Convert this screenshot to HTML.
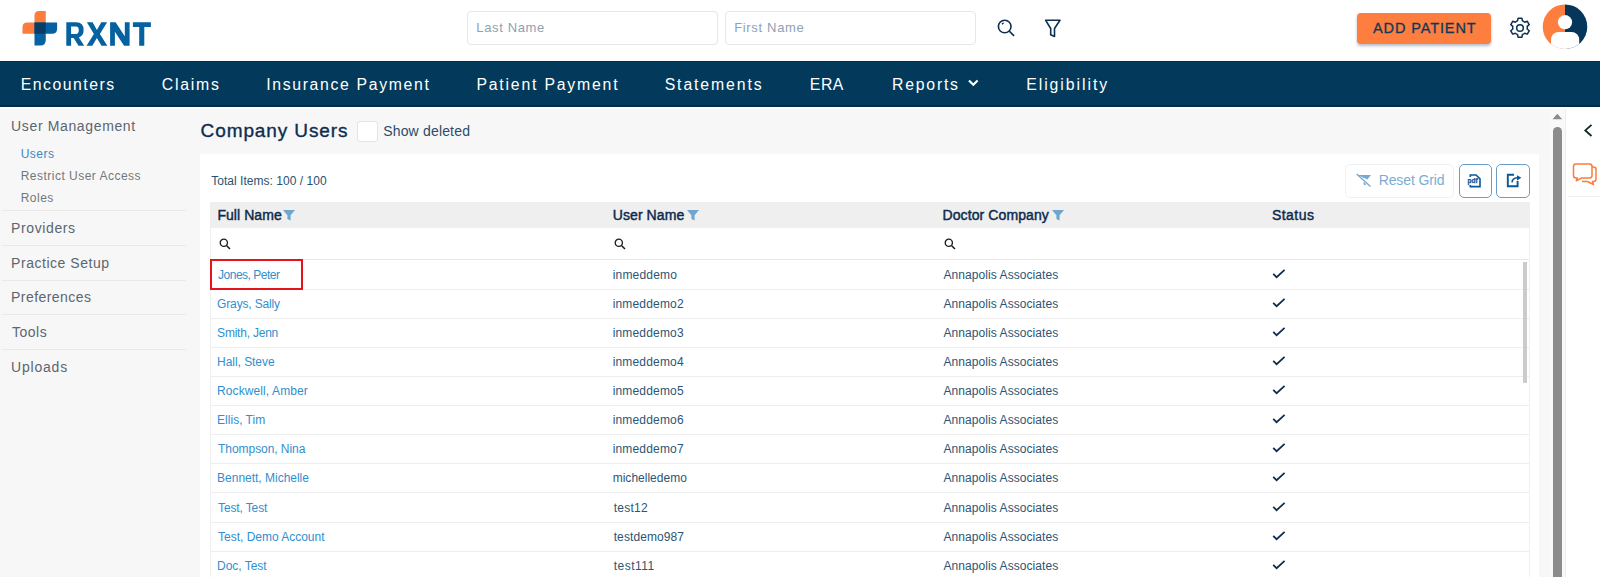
<!DOCTYPE html>
<html><head><meta charset="utf-8"><style>
html,body{margin:0;padding:0;}
body{width:1600px;height:577px;overflow:hidden;position:relative;background:#f7f7f7;font-family:'Liberation Sans', sans-serif;}
.t{position:absolute;white-space:nowrap;}
.a{position:absolute;}
</style></head><body>
<!-- header -->
<div class=a style="left:0;top:0;width:1600px;height:61px;background:#fff"></div>
<svg class=a style="left:0;top:0" width="160" height="60" viewBox="0 0 160 60">
 <path d="M34.5 15.5 Q34.5 11 39 11 H45.75 V33.75 H22.5 V27 Q22.5 22.5 27 22.5 H34.5 Z" fill="#fb7d3c"/>
 <path d="M34.5 22.5 H57.1 V28.8 Q57.1 33.75 52.1 33.75 H45.75 V40.1 Q45.75 45.6 40.25 45.6 H34.5 Z" fill="#0561a0"/>
 <path d="M34.5 22.5 H45.75 V31.2 Q45.75 33.75 43.2 33.75 H34.5 Z" fill="#0a3d66"/>
 <g fill="#0561a0" fill-rule="evenodd">
 <path d="M66.3 22.3 H76.2 Q83.6 22.3 83.6 30 Q83.6 35.8 78.9 37.4 L84.2 45.7 H78.5 L73.7 38 H71.1 V45.7 H66.3 Z M71.1 26.5 V33.9 H76 Q78.8 33.9 78.8 30.2 Q78.8 26.5 76 26.5 Z"/>
 <path d="M86.9 22.3 H92.6 L96.9 30.1 L101.3 22.3 H107.1 L99.9 34.1 L107.3 45.7 H101.5 L96.9 37.9 L92.3 45.7 H86.6 L93.9 34.1 Z"/>
 <path d="M110.1 22.3 H115.6 L124.8 36.2 V22.3 H129.6 V45.7 H124.1 L114.9 31.8 V45.7 H110.1 Z"/>
 <path d="M132.9 22.3 H150.9 V27 H144.3 V45.7 H139.2 V27 H132.9 Z"/>
 </g>
</svg>
<div class=a style="left:466.5px;top:11px;width:249px;height:32px;border:1px solid #e6e6e6;border-radius:4px;background:#fff"></div>
<div class=a style="left:725px;top:11px;width:249px;height:32px;border:1px solid #e6e6e6;border-radius:4px;background:#fff"></div>
<svg class=a style="left:995px;top:17px" width="22" height="22" viewBox="0 0 22 22"><circle cx="9.7" cy="9.5" r="6.3" fill="none" stroke="#0c2f52" stroke-width="1.6"/><path d="M7 7.2 L8.6 5.8" stroke="#0c2f52" stroke-width="1.3"/><path d="M14.2 14 L19 18.8" stroke="#0c2f52" stroke-width="1.7"/></svg>
<svg class=a style="left:1043px;top:18px" width="20" height="22" viewBox="0 0 20 22"><path d="M2.7 2.3 H17 L11.5 10.5 V18.5 L7.7 16.8 V10.5 Z" fill="none" stroke="#0c2f52" stroke-width="1.6" stroke-linejoin="round"/></svg>
<div class=a style="left:1356.6px;top:13.2px;width:134.5px;height:30.4px;background:#fd7e3e;border-radius:4px;box-shadow:0 2px 3px rgba(40,60,90,0.35)"></div>
<svg class=a style="left:1507px;top:15px" width="26" height="26" viewBox="0 0 26 26">
 <path d="M11.1 3.2 h3.8 l0.6 2.7 a7.6 7.6 0 0 1 2.2 1.3 l2.6 -0.9 l1.9 3.3 l-2 1.8 a7.6 7.6 0 0 1 0 2.6 l2 1.8 l-1.9 3.3 l-2.6 -0.9 a7.6 7.6 0 0 1 -2.2 1.3 l-0.6 2.7 h-3.8 l-0.6 -2.7 a7.6 7.6 0 0 1 -2.2 -1.3 l-2.6 0.9 l-1.9 -3.3 l2 -1.8 a7.6 7.6 0 0 1 0 -2.6 l-2 -1.8 l1.9 -3.3 l2.6 0.9 a7.6 7.6 0 0 1 2.2 -1.3 Z" fill="none" stroke="#0c2f52" stroke-width="1.5" stroke-linejoin="round"/>
 <circle cx="13" cy="13" r="3.3" fill="none" stroke="#0c2f52" stroke-width="1.5"/>
</svg>
<svg class=a style="left:1542px;top:4px" width="46" height="46" viewBox="0 0 46 46">
 <defs><clipPath id="avc"><circle cx="23" cy="22.7" r="22.3"/></clipPath></defs>
 <g clip-path="url(#avc)">
  <rect x="0" y="0" width="23" height="46" fill="#fd7e3e"/>
  <rect x="23" y="0" width="23" height="46" fill="#06375a"/>
  <circle cx="23" cy="18.2" r="7.1" fill="#fff"/>
  <rect x="9" y="28" width="28.2" height="30" rx="7.5" fill="#fff"/>
 </g>
</svg>
<!-- nav -->
<div class=a style="left:0;top:61px;width:1600px;height:46px;background:#033a5b;box-shadow:inset 0 -2px 0 #022b4b, inset 0 1px 0 #022e4c"></div>
<svg class=a style="left:966px;top:78px" width="14" height="10" viewBox="0 0 14 10"><path d="M3 2.5 L7.3 6.8 L11.6 2.5" fill="none" stroke="#fff" stroke-width="2.2"/></svg>
<div class=a style="left:0;top:107px;width:1600px;height:2px;background:#fff"></div>
<!-- sidebar separators -->
<div class=a style="left:2px;top:210px;width:184px;height:1px;background:#e9e9e9"></div>
<div class=a style="left:2px;top:245px;width:184px;height:1px;background:#e9e9e9"></div>
<div class=a style="left:2px;top:279.5px;width:184px;height:1px;background:#e9e9e9"></div>
<div class=a style="left:2px;top:314px;width:184px;height:1px;background:#e9e9e9"></div>
<div class=a style="left:2px;top:349px;width:184px;height:1px;background:#e9e9e9"></div>
<!-- checkbox -->
<div class=a style="left:357.4px;top:120.7px;width:18.6px;height:19px;border:1px solid #e4e4e4;border-radius:3px;background:#fff"></div>
<!-- card -->
<div class=a style="left:200px;top:154.3px;width:1339px;height:430px;background:#fff"></div>
<div class=a style="left:1344.7px;top:164px;width:107px;height:31.5px;border:1px solid #eef2f5;border-radius:5px;background:#fff"></div>
<svg class=a style="left:1355px;top:172px" width="18" height="16" viewBox="0 0 18 16"><path d="M2.5 3 H16 L12.3 7.5 Z" fill="#76aad0"/><path d="M1.6 2 L15.5 14.6" stroke="#76aad0" stroke-width="1.4"/><path d="M9 10 L11 12.2 L10.2 13.2 Q8.6 13.2 8.4 11.5 Z" fill="#76aad0"/></svg>
<div class=a style="left:1458.5px;top:164.2px;width:31.5px;height:31.5px;border:1px solid #6a9ec8;border-radius:5px;background:#fff"></div>
<div class=a style="left:1496.3px;top:164.2px;width:31.5px;height:31.5px;border:1px solid #6a9ec8;border-radius:5px;background:#fff"></div>
<svg class=a style="left:1466px;top:172px" width="18" height="18" viewBox="0 0 18 18"><path d="M4.3 5 V3 H10 L14 6.8 V14.6 H4.3 V13" fill="none" stroke="#0a5896" stroke-width="1.6"/><text x="1.5" y="11.4" font-family="Liberation Sans" font-weight="bold" font-size="6.6" fill="#0a5896" stroke="#0a5896" stroke-width="0.25" textLength="10.2" lengthAdjust="spacingAndGlyphs">pdf</text></svg>
<svg class=a style="left:1505px;top:172px" width="18" height="18" viewBox="0 0 18 18"><path d="M9 2.8 H2.8 V14.2 H12.6 V9" fill="none" stroke="#0a5896" stroke-width="1.9"/><path d="M7 10.3 Q7.4 6.2 12.5 5.8" fill="none" stroke="#0a5896" stroke-width="1.6"/><path d="M12 3.2 L16.4 5.8 L12 8.4 Z" fill="#0a5896"/></svg>
<!-- table -->
<div class=a style="left:210.1px;top:202px;width:1319.8px;height:25.7px;background:#efefef"></div>
<div class=a style="left:210px;top:227.7px;width:1px;height:350px;background:#f0f0f0"></div>
<div class=a style="left:1529px;top:227.7px;width:1px;height:350px;background:#f0f0f0"></div>
<div class=a style="left:211px;top:259px;width:1318px;height:1px;background:#e6e6e6"></div>
<div style="position:absolute;left:211px;top:289.00px;width:1318px;height:1px;background:#eeeeee"></div>
<div style="position:absolute;left:211px;top:318.07px;width:1318px;height:1px;background:#eeeeee"></div>
<div style="position:absolute;left:211px;top:347.14px;width:1318px;height:1px;background:#eeeeee"></div>
<div style="position:absolute;left:211px;top:376.21px;width:1318px;height:1px;background:#eeeeee"></div>
<div style="position:absolute;left:211px;top:405.28px;width:1318px;height:1px;background:#eeeeee"></div>
<div style="position:absolute;left:211px;top:434.35px;width:1318px;height:1px;background:#eeeeee"></div>
<div style="position:absolute;left:211px;top:463.42px;width:1318px;height:1px;background:#eeeeee"></div>
<div style="position:absolute;left:211px;top:492.49px;width:1318px;height:1px;background:#eeeeee"></div>
<div style="position:absolute;left:211px;top:521.56px;width:1318px;height:1px;background:#eeeeee"></div>
<div style="position:absolute;left:211px;top:550.63px;width:1318px;height:1px;background:#eeeeee"></div>
<div style="position:absolute;left:211px;top:579.70px;width:1318px;height:1px;background:#eeeeee"></div>

<svg style="position:absolute;left:218.5px;top:238px" width="13" height="12" viewBox="0 0 13 12"><circle cx="4.8" cy="4.8" r="3.6" fill="none" stroke="#1b1b1b" stroke-width="1.3"/><path d="M7.5 7.5 L11 11" stroke="#1b1b1b" stroke-width="1.5"/></svg>
<svg style="position:absolute;left:613.5px;top:238px" width="13" height="12" viewBox="0 0 13 12"><circle cx="4.8" cy="4.8" r="3.6" fill="none" stroke="#1b1b1b" stroke-width="1.3"/><path d="M7.5 7.5 L11 11" stroke="#1b1b1b" stroke-width="1.5"/></svg>
<svg style="position:absolute;left:944px;top:238px" width="13" height="12" viewBox="0 0 13 12"><circle cx="4.8" cy="4.8" r="3.6" fill="none" stroke="#1b1b1b" stroke-width="1.3"/><path d="M7.5 7.5 L11 11" stroke="#1b1b1b" stroke-width="1.5"/></svg>
<svg style="position:absolute;left:283.2px;top:209.5px" width="12" height="11" viewBox="0 0 12 11"><path d="M0 0 H12 L7.6 5.2 V10.5 L4.4 9 V5.2 Z" fill="#6fa6cf"/></svg>
<svg style="position:absolute;left:686.5px;top:209.5px" width="12" height="11" viewBox="0 0 12 11"><path d="M0 0 H12 L7.6 5.2 V10.5 L4.4 9 V5.2 Z" fill="#6fa6cf"/></svg>
<svg style="position:absolute;left:1051.7px;top:209.5px" width="12" height="11" viewBox="0 0 12 11"><path d="M0 0 H12 L7.6 5.2 V10.5 L4.4 9 V5.2 Z" fill="#6fa6cf"/></svg>
<svg style="position:absolute;left:1272px;top:269.00px" width="14" height="10" viewBox="0 0 14 10"><path d="M1.2 4.8 L4.6 8.2 L12.6 0.8" fill="none" stroke="#0c2b4d" stroke-width="1.7"/></svg>
<svg style="position:absolute;left:1272px;top:298.07px" width="14" height="10" viewBox="0 0 14 10"><path d="M1.2 4.8 L4.6 8.2 L12.6 0.8" fill="none" stroke="#0c2b4d" stroke-width="1.7"/></svg>
<svg style="position:absolute;left:1272px;top:327.14px" width="14" height="10" viewBox="0 0 14 10"><path d="M1.2 4.8 L4.6 8.2 L12.6 0.8" fill="none" stroke="#0c2b4d" stroke-width="1.7"/></svg>
<svg style="position:absolute;left:1272px;top:356.21px" width="14" height="10" viewBox="0 0 14 10"><path d="M1.2 4.8 L4.6 8.2 L12.6 0.8" fill="none" stroke="#0c2b4d" stroke-width="1.7"/></svg>
<svg style="position:absolute;left:1272px;top:385.28px" width="14" height="10" viewBox="0 0 14 10"><path d="M1.2 4.8 L4.6 8.2 L12.6 0.8" fill="none" stroke="#0c2b4d" stroke-width="1.7"/></svg>
<svg style="position:absolute;left:1272px;top:414.35px" width="14" height="10" viewBox="0 0 14 10"><path d="M1.2 4.8 L4.6 8.2 L12.6 0.8" fill="none" stroke="#0c2b4d" stroke-width="1.7"/></svg>
<svg style="position:absolute;left:1272px;top:443.42px" width="14" height="10" viewBox="0 0 14 10"><path d="M1.2 4.8 L4.6 8.2 L12.6 0.8" fill="none" stroke="#0c2b4d" stroke-width="1.7"/></svg>
<svg style="position:absolute;left:1272px;top:472.49px" width="14" height="10" viewBox="0 0 14 10"><path d="M1.2 4.8 L4.6 8.2 L12.6 0.8" fill="none" stroke="#0c2b4d" stroke-width="1.7"/></svg>
<svg style="position:absolute;left:1272px;top:501.56px" width="14" height="10" viewBox="0 0 14 10"><path d="M1.2 4.8 L4.6 8.2 L12.6 0.8" fill="none" stroke="#0c2b4d" stroke-width="1.7"/></svg>
<svg style="position:absolute;left:1272px;top:530.63px" width="14" height="10" viewBox="0 0 14 10"><path d="M1.2 4.8 L4.6 8.2 L12.6 0.8" fill="none" stroke="#0c2b4d" stroke-width="1.7"/></svg>
<svg style="position:absolute;left:1272px;top:559.70px" width="14" height="10" viewBox="0 0 14 10"><path d="M1.2 4.8 L4.6 8.2 L12.6 0.8" fill="none" stroke="#0c2b4d" stroke-width="1.7"/></svg>

<div class=a style="left:1523.4px;top:262.4px;width:3.6px;height:121px;background:#cbcbcb"></div>
<!-- red highlight -->
<div class=a style="left:210.1px;top:259.3px;width:89px;height:26.5px;border:2px solid #e3141c"></div>
<!-- outer scrollbar -->
<div class=a style="left:1549.8px;top:109.4px;width:15.6px;height:470px;background:#f9f9f9"></div>
<svg class=a style="left:1552px;top:113px" width="11" height="7" viewBox="0 0 11 7"><path d="M0.5 6.3 L5.3 0.8 L10.2 6.3 Z" fill="#8c8c8c"/></svg>
<div class=a style="left:1552.6px;top:127px;width:9.6px;height:460px;background:#8c8c8c;border-radius:5px"></div>
<!-- right panel -->
<div class=a style="left:1565.4px;top:109.4px;width:34.6px;height:470px;background:#fff;border-left:1px solid #ececec"></div>
<svg class=a style="left:1582px;top:123px" width="12" height="15" viewBox="0 0 12 15"><path d="M9.5 1.8 L3.3 7.4 L9.5 13" fill="none" stroke="#0b2b1f" stroke-width="1.8"/></svg>
<svg class=a style="left:1572px;top:162px" width="26" height="25" viewBox="0 0 26 25"><path d="M8.5 5 H21.5 Q24 5 24 7.5 V17 Q24 19.5 21.5 19.5 H20.5 L21.5 22.5 L15.5 19.5 H10" fill="none" stroke="#fb7d3c" stroke-width="1.5" stroke-linejoin="round"/><path d="M4 2 H17.5 Q20 2 20 4.5 V13.5 Q20 16 17.5 16 H9.5 L4.3 18.8 L5.3 16 H4 Q1.5 16 1.5 13.5 V4.5 Q1.5 2 4 2 Z" fill="#fff" stroke="#fb7d3c" stroke-width="1.5" stroke-linejoin="round"/></svg>
<div class=a style="left:1568px;top:195.5px;width:32px;height:1px;background:#efefef"></div>
<div class=t style="left:20.70px;top:77.00px;font-size:15.8px;line-height:15.8px;font-weight:normal;color:#ffffff;letter-spacing:1.500px;">Encounters</div>
<div class=t style="left:161.70px;top:77.00px;font-size:15.8px;line-height:15.8px;font-weight:normal;color:#ffffff;letter-spacing:1.800px;">Claims</div>
<div class=t style="left:266.20px;top:77.00px;font-size:15.8px;line-height:15.8px;font-weight:normal;color:#ffffff;letter-spacing:1.656px;">Insurance Payment</div>
<div class=t style="left:476.45px;top:77.00px;font-size:15.8px;line-height:15.8px;font-weight:normal;color:#ffffff;letter-spacing:1.804px;">Patient Payment</div>
<div class=t style="left:664.70px;top:77.00px;font-size:15.8px;line-height:15.8px;font-weight:normal;color:#ffffff;letter-spacing:1.889px;">Statements</div>
<div class=t style="left:809.80px;top:77.00px;font-size:15.8px;line-height:15.8px;font-weight:normal;color:#ffffff;letter-spacing:0.550px;">ERA</div>
<div class=t style="left:892.10px;top:77.00px;font-size:15.8px;line-height:15.8px;font-weight:normal;color:#ffffff;letter-spacing:1.767px;">Reports</div>
<div class=t style="left:1026.20px;top:77.00px;font-size:15.8px;line-height:15.8px;font-weight:normal;color:#ffffff;letter-spacing:1.950px;">Eligibility</div>
<div class=t style="left:476.30px;top:21.00px;font-size:13px;line-height:13px;font-weight:normal;color:#8da2b2;letter-spacing:0.638px;">Last Name</div>
<div class=t style="left:734.20px;top:21.00px;font-size:13px;line-height:13px;font-weight:normal;color:#8da2b2;letter-spacing:0.667px;">First Name</div>
<div class=t style="left:1373.00px;top:21.10px;font-size:14.5px;line-height:14.5px;font-weight:normal;color:#0b395c;letter-spacing:0.890px;-webkit-text-stroke:0.3px #0b395c;">ADD PATIENT</div>
<div class=t style="left:11.10px;top:118.50px;font-size:14px;line-height:14px;font-weight:normal;color:#5c6570;letter-spacing:0.636px;">User Management</div>
<div class=t style="left:20.70px;top:148.20px;font-size:12px;line-height:12px;font-weight:normal;color:#3889c6;letter-spacing:0.475px;">Users</div>
<div class=t style="left:20.70px;top:170.00px;font-size:12px;line-height:12px;font-weight:normal;color:#72777c;letter-spacing:0.484px;">Restrict User Access</div>
<div class=t style="left:20.70px;top:192.30px;font-size:12px;line-height:12px;font-weight:normal;color:#72777c;letter-spacing:0.500px;">Roles</div>
<div class=t style="left:11.10px;top:220.60px;font-size:14px;line-height:14px;font-weight:normal;color:#5c6570;letter-spacing:0.600px;">Providers</div>
<div class=t style="left:11.10px;top:255.60px;font-size:14px;line-height:14px;font-weight:normal;color:#5c6570;letter-spacing:0.531px;">Practice Setup</div>
<div class=t style="left:11.10px;top:289.80px;font-size:14px;line-height:14px;font-weight:normal;color:#5c6570;letter-spacing:0.440px;">Preferences</div>
<div class=t style="left:12.10px;top:324.80px;font-size:14px;line-height:14px;font-weight:normal;color:#5c6570;letter-spacing:0.475px;">Tools</div>
<div class=t style="left:11.10px;top:359.50px;font-size:14px;line-height:14px;font-weight:normal;color:#5c6570;letter-spacing:0.783px;">Uploads</div>
<div class=t style="left:200.60px;top:121.20px;font-size:19px;line-height:19px;font-weight:normal;color:#0c2d4f;letter-spacing:0.892px;-webkit-text-stroke:0.35px #0c2d4f;">Company Users</div>
<div class=t style="left:383.20px;top:124.25px;font-size:14px;line-height:14px;font-weight:normal;color:#2b4b69;letter-spacing:0.173px;">Show deleted</div>
<div class=t style="left:211.20px;top:175.40px;font-size:12px;line-height:12px;font-weight:normal;color:#28526f;letter-spacing:0.033px;">Total Items: 100 / 100</div>
<div class=t style="left:1378.70px;top:173.00px;font-size:14px;line-height:14px;font-weight:normal;color:#7badd1;letter-spacing:-0.122px;">Reset Grid</div>
<div class=t style="left:217.40px;top:208.00px;font-size:14px;line-height:14px;font-weight:normal;color:#0c2b4d;letter-spacing:0.062px;-webkit-text-stroke:0.45px #0c2b4d;">Full Name</div>
<div class=t style="left:612.80px;top:208.00px;font-size:14px;line-height:14px;font-weight:normal;color:#0c2b4d;letter-spacing:0.075px;-webkit-text-stroke:0.45px #0c2b4d;">User Name</div>
<div class=t style="left:942.50px;top:208.00px;font-size:14px;line-height:14px;font-weight:normal;color:#0c2b4d;letter-spacing:0.100px;-webkit-text-stroke:0.45px #0c2b4d;">Doctor Company</div>
<div class=t style="left:1271.90px;top:208.00px;font-size:14px;line-height:14px;font-weight:normal;color:#0c2b4d;letter-spacing:0.480px;-webkit-text-stroke:0.45px #0c2b4d;">Status</div>
<div class=t style="left:218.10px;top:269.00px;font-size:12px;line-height:12px;font-weight:normal;color:#2f8fd0;letter-spacing:-0.500px;">Jones, Peter</div>
<div class=t style="left:612.70px;top:269.00px;font-size:12px;line-height:12px;font-weight:normal;color:#2c5575;letter-spacing:0.188px;">inmeddemo</div>
<div class=t style="left:943.50px;top:269.00px;font-size:12px;line-height:12px;font-weight:normal;color:#2c5575;letter-spacing:0.068px;">Annapolis Associates</div>
<div class=t style="left:217.10px;top:298.07px;font-size:12px;line-height:12px;font-weight:normal;color:#2f8fd0;letter-spacing:-0.155px;">Grays, Sally</div>
<div class=t style="left:612.70px;top:298.07px;font-size:12px;line-height:12px;font-weight:normal;color:#2c5575;letter-spacing:0.167px;">inmeddemo2</div>
<div class=t style="left:943.50px;top:298.07px;font-size:12px;line-height:12px;font-weight:normal;color:#2c5575;letter-spacing:0.068px;">Annapolis Associates</div>
<div class=t style="left:217.10px;top:327.14px;font-size:12px;line-height:12px;font-weight:normal;color:#2f8fd0;letter-spacing:-0.220px;">Smith, Jenn</div>
<div class=t style="left:612.70px;top:327.14px;font-size:12px;line-height:12px;font-weight:normal;color:#2c5575;letter-spacing:0.167px;">inmeddemo3</div>
<div class=t style="left:943.50px;top:327.14px;font-size:12px;line-height:12px;font-weight:normal;color:#2c5575;letter-spacing:0.068px;">Annapolis Associates</div>
<div class=t style="left:217.10px;top:356.21px;font-size:12px;line-height:12px;font-weight:normal;color:#2f8fd0;letter-spacing:-0.050px;">Hall, Steve</div>
<div class=t style="left:612.70px;top:356.21px;font-size:12px;line-height:12px;font-weight:normal;color:#2c5575;letter-spacing:0.167px;">inmeddemo4</div>
<div class=t style="left:943.50px;top:356.21px;font-size:12px;line-height:12px;font-weight:normal;color:#2c5575;letter-spacing:0.068px;">Annapolis Associates</div>
<div class=t style="left:217.10px;top:385.28px;font-size:12px;line-height:12px;font-weight:normal;color:#2f8fd0;letter-spacing:0.093px;">Rockwell, Amber</div>
<div class=t style="left:612.70px;top:385.28px;font-size:12px;line-height:12px;font-weight:normal;color:#2c5575;letter-spacing:0.167px;">inmeddemo5</div>
<div class=t style="left:943.50px;top:385.28px;font-size:12px;line-height:12px;font-weight:normal;color:#2c5575;letter-spacing:0.068px;">Annapolis Associates</div>
<div class=t style="left:217.10px;top:414.35px;font-size:12px;line-height:12px;font-weight:normal;color:#2f8fd0;letter-spacing:0.011px;">Ellis, Tim</div>
<div class=t style="left:612.70px;top:414.35px;font-size:12px;line-height:12px;font-weight:normal;color:#2c5575;letter-spacing:0.167px;">inmeddemo6</div>
<div class=t style="left:943.50px;top:414.35px;font-size:12px;line-height:12px;font-weight:normal;color:#2c5575;letter-spacing:0.068px;">Annapolis Associates</div>
<div class=t style="left:218.10px;top:443.42px;font-size:12px;line-height:12px;font-weight:normal;color:#2f8fd0;letter-spacing:-0.062px;">Thompson, Nina</div>
<div class=t style="left:612.70px;top:443.42px;font-size:12px;line-height:12px;font-weight:normal;color:#2c5575;letter-spacing:0.167px;">inmeddemo7</div>
<div class=t style="left:943.50px;top:443.42px;font-size:12px;line-height:12px;font-weight:normal;color:#2c5575;letter-spacing:0.068px;">Annapolis Associates</div>
<div class=t style="left:217.10px;top:472.49px;font-size:12px;line-height:12px;font-weight:normal;color:#2f8fd0;letter-spacing:-0.013px;">Bennett, Michelle</div>
<div class=t style="left:612.70px;top:472.49px;font-size:12px;line-height:12px;font-weight:normal;color:#2c5575;letter-spacing:0.009px;">michelledemo</div>
<div class=t style="left:943.50px;top:472.49px;font-size:12px;line-height:12px;font-weight:normal;color:#2c5575;letter-spacing:0.068px;">Annapolis Associates</div>
<div class=t style="left:218.10px;top:501.56px;font-size:12px;line-height:12px;font-weight:normal;color:#2f8fd0;letter-spacing:-0.133px;">Test, Test</div>
<div class=t style="left:613.70px;top:501.56px;font-size:12px;line-height:12px;font-weight:normal;color:#2c5575;letter-spacing:0.240px;">test12</div>
<div class=t style="left:943.50px;top:501.56px;font-size:12px;line-height:12px;font-weight:normal;color:#2c5575;letter-spacing:0.068px;">Annapolis Associates</div>
<div class=t style="left:218.10px;top:530.63px;font-size:12px;line-height:12px;font-weight:normal;color:#2f8fd0;letter-spacing:-0.018px;">Test, Demo Account</div>
<div class=t style="left:613.70px;top:530.63px;font-size:12px;line-height:12px;font-weight:normal;color:#2c5575;letter-spacing:0.090px;">testdemo987</div>
<div class=t style="left:943.50px;top:530.63px;font-size:12px;line-height:12px;font-weight:normal;color:#2c5575;letter-spacing:0.068px;">Annapolis Associates</div>
<div class=t style="left:217.10px;top:559.70px;font-size:12px;line-height:12px;font-weight:normal;color:#2f8fd0;letter-spacing:-0.037px;">Doc, Test</div>
<div class=t style="left:613.70px;top:559.70px;font-size:12px;line-height:12px;font-weight:normal;color:#2c5575;letter-spacing:0.483px;">test111</div>
<div class=t style="left:943.50px;top:559.70px;font-size:12px;line-height:12px;font-weight:normal;color:#2c5575;letter-spacing:0.068px;">Annapolis Associates</div>
</body></html>
